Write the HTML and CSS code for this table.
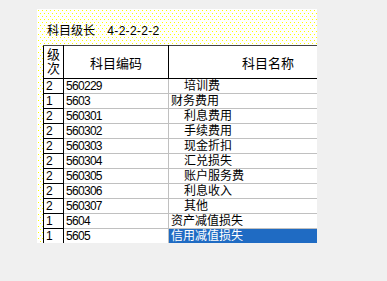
FILE: index.html
```html
<!DOCTYPE html>
<html lang="zh">
<head>
    <meta charset="utf-8">
    <title>科目级长</title>
    <link rel="stylesheet" href="styles.css">
</head>
<body>
    <div class="panel">
        <div class="title">
            <span>科目级长</span>
            <span class="levels">4-2-2-2-2</span>
        </div>
        <table class="grid">
            <colgroup>
                <col class="c-level">
                <col class="c-code">
                <col class="c-name">
            </colgroup>
            <thead>
                <tr>
                    <th class="level"><span>级</span><span>次</span></th>
                    <th>科目编码</th>
                    <th>科目名称</th>
                </tr>
            </thead>
            <tbody>
                <tr><td class="level">2</td><td>560229</td><td class="sub">培训费</td></tr>
                <tr><td class="level">1</td><td>5603</td><td>财务费用</td></tr>
                <tr><td class="level">2</td><td>560301</td><td class="sub">利息费用</td></tr>
                <tr><td class="level">2</td><td>560302</td><td class="sub">手续费用</td></tr>
                <tr><td class="level">2</td><td>560303</td><td class="sub">现金折扣</td></tr>
                <tr><td class="level">2</td><td>560304</td><td class="sub">汇兑损失</td></tr>
                <tr><td class="level">2</td><td>560305</td><td class="sub">账户服务费</td></tr>
                <tr><td class="level">2</td><td>560306</td><td class="sub">利息收入</td></tr>
                <tr><td class="level">2</td><td>560307</td><td class="sub">其他</td></tr>
                <tr><td class="level">1</td><td>5604</td><td>资产减值损失</td></tr>
                <tr><td class="level">1</td><td>5605</td><td class="selected">信用减值损失</td></tr>
            </tbody>
        </table>
    </div>
</body>
</html>
```

FILE: styles.css
```css
* {
    box-sizing: border-box;
}

body {
    margin: 0;
    background: #f0f0f0;
    font-family: "Liberation Sans", "Noto Sans CJK SC", sans-serif;
    font-size: 12px;
    color: #000;
}

/* white form with a staggered 1px yellow dot texture */
.panel {
    margin: 9px 0 0 37px;
    width: 280px;
    height: 234px;
    overflow: hidden;
    padding: 0 0 0 6px;
    background-color: #fff;
    background-image:
        conic-gradient(at 1px 1px, transparent 270deg, #ffff00 0),
        conic-gradient(at 1px 1px, transparent 270deg, #ffff00 0);
    background-size: 4px 6px;
    background-position: 1px 1px, 3px 4px;
}

.title {
    height: 36px;
    padding: 14px 0 0 4px;
    line-height: 16px;
    white-space: nowrap;
}

.levels {
    margin-left: 9px;
    letter-spacing: 0.3px;
}

.grid {
    border-collapse: collapse;
    table-layout: fixed;
    width: 324px;
    background: #fff;
}

.c-level { width: 20px; }
.c-code { width: 105px; }
.c-name { width: 199px; }

.grid th {
    height: 33px;
    font-weight: normal;
    font-size: 13px;
    border-top: 1px solid #444;
    border-bottom: 1px solid #000;
    border-left: 1px solid #000;
    border-right: 1px solid #000;
    padding: 0;
}

.grid th.level {
    line-height: 14px;
    font-size: 13px;
}

.grid th.level span {
    display: block;
}

.grid td {
    height: 15px;
    padding: 0 0 0 2px;
    line-height: 14px;
    border: 1px solid #c0c0c0;
    white-space: nowrap;
    overflow: hidden;
}

.grid td.level,
.grid td:nth-child(2) {
    letter-spacing: -0.7px;
}

.grid td.level {
    border: 1px solid #000;
}

.grid td.sub {
    padding-left: 15px;
}

.grid td.selected {
    background: #1f6bc3;
    color: #fff;
}
```
